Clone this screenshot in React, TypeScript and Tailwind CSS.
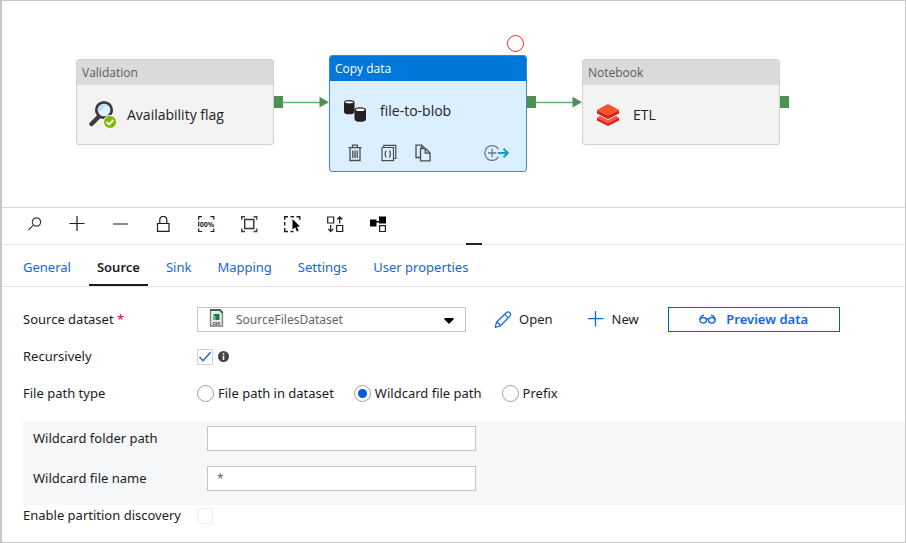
import { useState } from "react";
import type { ReactNode } from "react";

const tabs = ["General", "Source", "Sink", "Mapping", "Settings", "User properties"];

function MagnifierCheck() {
  return (
    <svg width="30" height="30" viewBox="0 0 30 30" aria-hidden="true">
      <path d="M11.500 17 4.500 24" stroke="#3c3c41" strokeWidth="4.500" strokeLinecap="round" />
      <circle cx="17" cy="10" r="7.700" fill="#dff1fb" stroke="#3c3c41" strokeWidth="2.800" />
      <path d="M12 12a5.500 5.500 0 0 1 8-7z" fill="#b9e0f5" />
      <circle cx="23" cy="22" r="6.500" fill="#7fba00" stroke="#fff" strokeWidth="1" />
      <path d="m19.600 22 2.500 2.500 4.300-4.700" fill="none" stroke="#fff" strokeWidth="1.800" />
    </svg>
  );
}

function Cylinders() {
  return (
    <svg width="24" height="24" viewBox="0 0 24 24" aria-hidden="true">
      <path d="M1 3.500v9.500c0 1.400 2.300 2.300 5.200 2.300s5.300-.9 5.300-2.300V3.500z" fill="#231f20" />
      <ellipse cx="6.250" cy="3.300" rx="4.700" ry="1.700" fill="#fff" stroke="#231f20" strokeWidth="1.200" />
      <path d="M11.500 10.500v9.700c0 1.500 2.500 2.600 5.700 2.600s5.800-1.100 5.800-2.600v-9.700z" fill="#231f20" />
      <ellipse cx="17.250" cy="10.800" rx="5.100" ry="1.900" fill="#fff" stroke="#231f20" strokeWidth="1.200" />
    </svg>
  );
}

function Layers() {
  return (
    <svg width="24" height="24" viewBox="0 0 24 24" aria-hidden="true">
      <path d="M1 14.500v3L12 23l11-5.500v-3L12 20z" fill="#dc2020" />
      <path d="M1 14.500 4 13l8 4 8-4 3 1.500L12 20z" fill="#f4582c" />
      <path d="M1 7v3.500l11 5.700 11-5.700V7l-11 5.500z" fill="#dc2020" />
      <path d="M12 1 1 7l11 5.700L23 7z" fill="#f4552b" />
    </svg>
  );
}

function Trash() {
  return (
    <svg width="16" height="18" viewBox="0 0 16 18" fill="none" stroke="#484b50" strokeWidth="1.300" aria-hidden="true">
      <path d="M1.500 3.600h13M5.500 3.500V1.200h5v2.300M3 3.700v12.800h10V3.700M5.800 6.500v7.500M8 6.500v7.500M10.200 6.500v7.500" />
    </svg>
  );
}

function CodePages() {
  return (
    <svg width="16" height="18" viewBox="0 0 16 18" fill="none" stroke="#484b50" strokeWidth="1.200" aria-hidden="true">
      <path d="M1 3.500h11.500v13.200H1zM2.800 3.300V1.300h12v13.200h-2" />
      <path d="M5.500 7c-1.200 0-1 .7-1 1.800 0 .8-.3 1.200-1 1.300.7.100 1 .5 1 1.300 0 1.100-.2 1.800 1 1.800M8 7c1.200 0 1 .7 1 1.800 0 .8.300 1.200 1 1.300-.7.100-1 .5-1 1.300 0 1.100.2 1.800-1 1.800" />
    </svg>
  );
}

function CopyPages() {
  return (
    <svg width="16" height="18" viewBox="0 0 16 18" fill="none" stroke="#484b50" strokeWidth="1.300" aria-hidden="true">
      <path d="M5 13.500H1V1.200h5.500l3 3M6.500 1.200V4" />
      <path d="M5.500 4.500h5L15 9v7.800H5.500zM10.300 4.700V9.200H15" />
    </svg>
  );
}

function AddOutput() {
  return (
    <svg width="26" height="18" viewBox="0 0 26 18" fill="none" aria-hidden="true">
      <path d="M14.500 5.200A7.400 7.400 0 1 0 14.500 12.800M8.200 4.800v8.400M4 9h8.400" stroke="#68788a" strokeWidth="1.300" />
      <path d="M14 9h9.500M19.500 4.800 23.800 9l-4.300 4.200" stroke="#129bd0" strokeWidth="2" />
    </svg>
  );
}

function ActivityNode({ title, name, icon, selected, place, children }: {
  title: string; name: string; icon: ReactNode; selected?: boolean; place: string; children?: ReactNode;
}) {
  return (
    <article
      className={`absolute w-[198px] overflow-hidden rounded-[3px] border font-['Open_Sans','Noto_Sans',sans-serif] ${place} ${
        selected ? "border-[#3a93b4] bg-[#dcefff]" : "border-[#d0d0d0] bg-[#f3f3f3]"
      }`}
    >
      <header className={`h-[25px] px-[5px] text-xs leading-[26px] ${selected ? "bg-[#0078d9] text-white" : "bg-[#dadada] text-[#5a5a5a]"}`}>
        {title}
      </header>
      <div className="flex h-[59px] items-center text-sm text-[#222]">
        <span className="flex w-[50px] justify-center">{icon}</span>
        <span>{name}</span>
      </div>
      {children}
    </article>
  );
}

function Port({ place }: { place: string }) {
  return <span className={`absolute top-[95px] h-3 w-[9px] bg-[#4a9152] ${place}`} />;
}

function Arrow({ place }: { place: string }) {
  return (
    <svg className={`absolute top-[95px] ${place}`} width="47" height="12" viewBox="0 0 47 12" aria-hidden="true">
      <path d="M0 6.500h38" stroke="#6bad71" strokeWidth="1.400" />
      <path d="M37.500.700 47 6.300l-9.500 5.300z" fill="#4a9152" />
    </svg>
  );
}

function Tool({ label, children }: { label: string; children: ReactNode }) {
  return (
    <button type="button" aria-label={label} className="h-[17px] w-[17px]">
      <svg width="17" height="17" viewBox="0 0 17 17" fill="none" stroke="#1f1f1f" strokeWidth="1.200" aria-hidden="true">
        {children}
      </svg>
    </button>
  );
}

function Toolbar() {
  return (
    <div className="flex h-[37px] items-center gap-[26px] border-b border-[#e4e4e4] pb-1 pl-6">
      <Tool label="Search">
        <circle cx="10.500" cy="6" r="4.200" stroke="#444" />
        <path d="M7.400 9.100 2.500 14" stroke="#444" />
      </Tool>
      <Tool label="Zoom in"><path d="M8 0v15M.5 7.500h15" /></Tool>
      <Tool label="Zoom out"><path d="M1 8h15" stroke="#444" /></Tool>
      <Tool label="Lock">
        <path d="M2.500 7.500h11.500V15.300H2.500zM4.800 7.500V4a3.500 3.500 0 0 1 7 0v3.500" />
      </Tool>
      <Tool label="Zoom to 100%">
        <path d="M4 .7H.700v3M12.500.700h3.300v3M4 15.500H.700v-3M12.500 15.500h3.300v-3M.7 5.500v5" />
        <text x="9" y="10.500" textAnchor="middle" fontSize="7" fontWeight="700" fill="#1f1f1f" stroke="none">00%</text>
      </Tool>
      <Tool label="Zoom to fit">
        <path d="M4 .7H.700v3M12.500.700h3.300v3M4 15.500H.700v-3M12.500 15.500h3.300v-3" stroke="#444" strokeWidth="1.400" />
        <path d="M3.700 3.500h9.100v9H3.700z" stroke="#333" strokeWidth="1.400" />
      </Tool>
      <Tool label="Multi select">
        <path d="M4 .7H.700v3M6.500.7h3.500M12.500.700h3.300v3M.7 6v3.500M.7 12v3.500H4M6.500 15.500h3" strokeWidth="1.400" />
        <path d="m8.500 3 7.500 7.500-3.200.2 1.800 4-1.700.7-1.700-4.100-2.700 2.200z" fill="#000" stroke="none" />
      </Tool>
      <Tool label="Auto align">
        <path d="M.7 1h6v6h-6zM9.700 9.500h6v6h-6zM12.700 7.500V1M10.200 3.500l2.500-2.700 2.500 2.700M3.700 9v6.500M1.200 12.800l2.500 2.700 2.500-2.700" />
      </Tool>
      <Tool label="Show lineage">
        <path d="M-.5 3.500h7v7h-7zM9 .5h7v7H9zM6 5h4v1.500H6z" fill="#000" stroke="none" />
        <path d="M9.600 9.700h5.800v5.800H9.600z" />
      </Tool>
    </div>
  );
}

function CsvFile() {
  return (
    <svg className="pointer-events-none absolute left-3 top-[2px]" width="15" height="18" viewBox="0 0 15 18" aria-hidden="true">
      <path d="M1.500 1h9.500l2.500 2.500V17h-12z" fill="#e6e9ea" stroke="#75807f" strokeWidth="1.300" />
      <path d="M1 1h10l2.500 3" fill="none" stroke="#2d5548" strokeWidth="1.600" />
      <path d="M4.500 5h6v6h-6z" fill="#118043" />
      <path d="M4.500 7.500H6V11" fill="none" stroke="#e6e9ea" strokeWidth=".7" />
      <text x="7.500" y="15.500" textAnchor="middle" fontSize="5" fontWeight="700" fill="#444">csv</text>
    </svg>
  );
}

const fieldBox = "h-[25px] w-[269px] border border-[#c4c4c4] bg-white text-xs text-[#666] outline-none";
const labelBox = "w-[174px] shrink-0";

function Radio({ label, value, checked, onChange }: { label: string; value: string; checked: boolean; onChange: (v: string) => void }) {
  return (
    <label className="flex items-center gap-1">
      <input
        type="radio"
        name="pathType"
        value={value}
        checked={checked}
        onChange={() => onChange(value)}
        className="h-[17px] w-[17px] appearance-none rounded-full border border-[#a0a0a0] bg-white bg-clip-content p-[3px] checked:bg-[#015cda]"
      />
      {label}
    </label>
  );
}

export default function App() {
  const [tab, setTab] = useState("Source");
  const [pathType, setPathType] = useState("wildcard");
  const [recursive, setRecursive] = useState(true);

  return (
    <main className="min-h-screen border border-l-2 border-[#c6c6c6] bg-white font-['Noto_Sans','Open_Sans',sans-serif] text-[13px] text-[#1c1c1c]">
      <section aria-label="Pipeline canvas" className="relative h-[207px] overflow-hidden border-b border-[#d8d8d8]">
        <ActivityNode title="Validation" name="Availability flag" icon={<MagnifierCheck />} place="left-[74px] top-[58px]" />
        <Port place="left-[272px]" />
        <Arrow place="left-[280px]" />
        <span className="absolute left-[505px] top-[34px] h-[17px] w-[17px] rounded-full border border-[#ff1f1f]" />
        <ActivityNode title="Copy data" name="file-to-blob" icon={<Cylinders />} selected place="left-[327px] top-[54px]">
          <div className="flex h-[31px] items-start pl-[17px] pr-4 pt-1">
            <div className="flex gap-[18px]">
              <button type="button" aria-label="Delete"><Trash /></button>
              <button type="button" aria-label="View code"><CodePages /></button>
              <button type="button" aria-label="Clone"><CopyPages /></button>
            </div>
            <button type="button" aria-label="Add output" className="ml-auto"><AddOutput /></button>
          </div>
        </ActivityNode>
        <Port place="left-[525px]" />
        <Arrow place="left-[533px]" />
        <ActivityNode title="Notebook" name="ETL" icon={<Layers />} place="left-[580px] top-[58px]" />
        <Port place="left-[778px]" />
      </section>

      <div className="relative">
        <Toolbar />
        <span className="absolute bottom-0 left-[464px] h-[2px] w-4 bg-[#222]" />
      </div>

      <nav role="tablist" className="flex h-[42px] gap-[10px] border-b border-[#e4e4e4] pl-[13px]">
        {tabs.map((t) => (
          <button
            key={t}
            type="button"
            role="tab"
            aria-selected={t === tab}
            onClick={() => setTab(t)}
            className={`border-b-2 px-2 pt-[7px] ${t === tab ? "border-[#1c1c1c] font-semibold text-[#1c1c1c]" : "border-transparent text-[#1467dc]"}`}
          >
            {t}
          </button>
        ))}
      </nav>

      <form className="pb-3 pl-[21px] pt-5">
        <div className="flex h-[25px] items-center">
          <label htmlFor="dataset" className={labelBox}>
            Source dataset <span className="text-[#c50f1f]">*</span>
          </label>
          <div className="relative">
            <select id="dataset" className={`${fieldBox} block appearance-none pl-[38px]`}>
              <option>SourceFilesDataset</option>
            </select>
            <CsvFile />
            <svg className="pointer-events-none absolute right-3 top-[11px]" width="10" height="6" viewBox="0 0 10 6" aria-hidden="true">
              <path d="M1 0h8l1 1-5 5-5-5z" fill="#000" />
            </svg>
          </div>
          <button type="button" className="ml-7 flex items-center gap-[7px]">
            <svg width="18" height="18" viewBox="0 0 18 18" fill="none" stroke="#1467dc" strokeWidth="1.200" strokeLinejoin="round" aria-hidden="true">
              <path d="m1.200 16.300 1.300-5L12.200 1.700a2.500 2.500 0 0 1 3.600 3.600L6.100 15zM10.700 3.200l3.600 3.600M2.500 11.300c2 .3 3.300 1.600 3.600 3.700" />
            </svg>
            Open
          </button>
          <button type="button" className="ml-[34px] flex items-center gap-2">
            <svg width="17" height="17" viewBox="0 0 17 17" stroke="#1467dc" strokeWidth="1.300" aria-hidden="true">
              <path d="M8.500 0v15.500M1 7.700h15.500" />
            </svg>
            New
          </button>
          <button type="button" className="ml-[29px] flex h-[25px] w-[172px] items-center justify-center gap-[10px] border border-[#015cda] font-semibold text-[#1467dc]">
            <svg width="17" height="11" viewBox="0 0 17 11" fill="none" stroke="#1467dc" strokeWidth="1.300" aria-hidden="true">
              <ellipse cx="4.200" cy="6.300" rx="3.300" ry="2.800" />
              <ellipse cx="12.800" cy="6.300" rx="3.300" ry="2.800" />
              <path d="M7.300 5.500c.7-.6 1.700-.6 2.400 0M.900 6C1 3.500 2.500 1.500 5 1.200M16.100 6c-.1-2.500-1.600-4.500-4.100-4.800" />
            </svg>
            Preview data
          </button>
        </div>

        <div className="mt-3 flex h-[25px] items-center">
          <label htmlFor="recursive" className={labelBox}>Recursively</label>
          <span className="relative">
            <input
              id="recursive"
              type="checkbox"
              checked={recursive}
              onChange={(e) => setRecursive(e.target.checked)}
              className="block h-4 w-4 appearance-none border border-[#d2d2d2] bg-white"
            />
            {recursive && (
              <svg className="pointer-events-none absolute left-0 top-0" width="16" height="16" viewBox="0 0 16 16" fill="none" aria-hidden="true">
                <path d="m2.500 8 3.500 3.700 7.500-8.500" stroke="#1467dc" strokeWidth="1.400" />
              </svg>
            )}
          </span>
          <svg className="ml-[5px]" width="11" height="11" viewBox="0 0 11 11" aria-hidden="true">
            <circle cx="5.500" cy="5.500" r="5.500" fill="#444" />
            <path d="M5.500 2v1.600M5.500 4.500V9" stroke="#fff" strokeWidth="1.500" />
          </svg>
        </div>

        <fieldset className="mt-3 flex h-[25px] items-center" aria-labelledby="path-type">
          <span id="path-type" className={labelBox}>File path type</span>
          <div className="flex gap-5">
            <Radio label="File path in dataset" value="dataset" checked={pathType === "dataset"} onChange={setPathType} />
            <Radio label="Wildcard file path" value="wildcard" checked={pathType === "wildcard"} onChange={setPathType} />
            <Radio label="Prefix" value="prefix" checked={pathType === "prefix"} onChange={setPathType} />
          </div>
        </fieldset>

        <div className="mt-[15px] flex flex-col gap-[15px] bg-[#f6f7f9] pb-[14px] pl-[10px] pt-[5px]">
          <div className="flex items-center">
            <label htmlFor="folder" className={labelBox}>Wildcard folder path</label>
            <input id="folder" type="text" className={`${fieldBox} px-[9px]`} />
          </div>
          <div className="flex items-center">
            <label htmlFor="file" className={labelBox}>Wildcard file name</label>
            <input id="file" type="text" defaultValue="*" className={`${fieldBox} px-[9px]`} />
          </div>
        </div>

        <div className="flex h-[22px] items-center">
          <label htmlFor="partition" className={labelBox}>Enable partition discovery</label>
          <input id="partition" type="checkbox" className="h-4 w-4 appearance-none border border-[#f0f0f0] bg-white" />
        </div>
      </form>
    </main>
  );
}
